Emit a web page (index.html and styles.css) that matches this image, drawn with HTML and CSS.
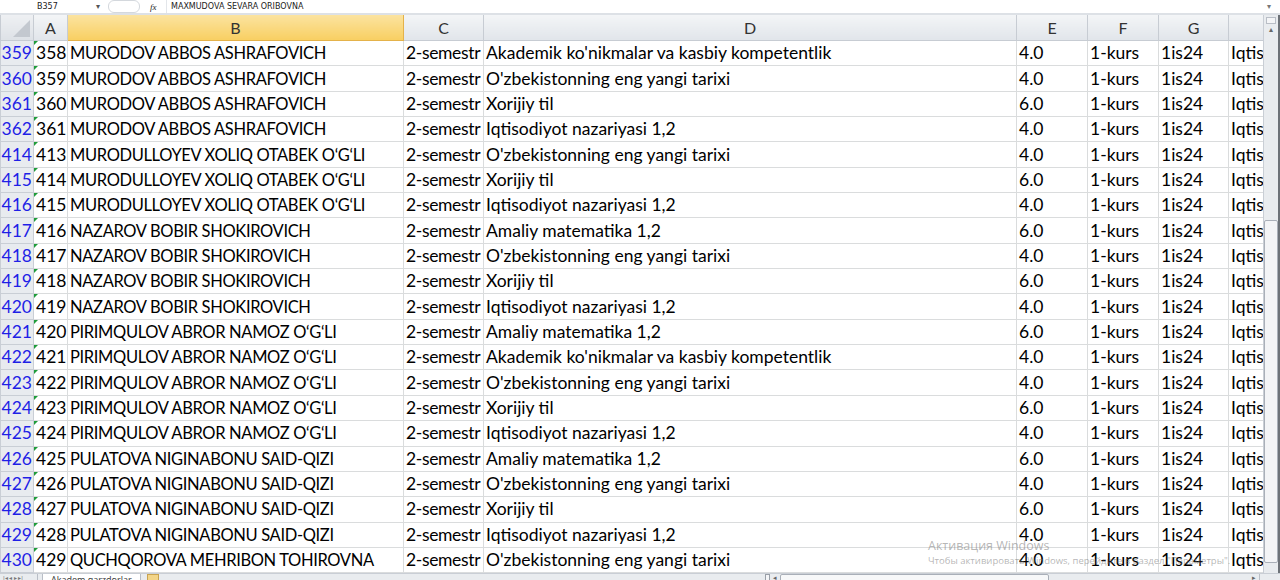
FILE: index.html
```html
<!DOCTYPE html>
<html lang="uz">
<head>
  <meta charset="UTF-8" />
  <title>Akadem qarzdorlar</title>
  <link rel="stylesheet" href="styles.css">
</head>
<body>

  <!-- formula bar -->
  <div class="formula-bar">
    <div class="name-box">B357</div>
    <div class="name-arrow">▾</div>
    <div class="fx-btn"></div>
    <div class="fx">fx</div>
    <div class="formula-text">MAXMUDOVA SEVARA ORIBOVNA</div>
    <div class="formula-expand">▾</div>
  </div>

  <div class="sheet">
    <div class="grid-wrap">
      <table class="grid">
        <colgroup>
          <col class="c-num"><col class="c-a"><col class="c-b"><col class="c-c"><col class="c-d"><col class="c-e"><col class="c-f"><col class="c-g"><col class="c-h">
        </colgroup>
        <thead>
          <tr>
            <th class="corner"><span class="corner-tri"></span></th>
            <th>A</th><th class="active">B</th><th>C</th><th>D</th><th>E</th><th>F</th><th>G</th><th></th>
          </tr>
        </thead>
        <tbody>
          <tr><td class="rn">359</td><td class="txt">358</td><td class="nm">MURODOV ABBOS ASHRAFOVICH</td><td class="sem">2-semestr</td><td>Akademik ko'nikmalar va kasbiy kompetentlik</td><td>4.0</td><td>1-kurs</td><td>1is24</td><td>Iqtisodiyot</td></tr>
          <tr><td class="rn">360</td><td class="txt">359</td><td class="nm">MURODOV ABBOS ASHRAFOVICH</td><td class="sem">2-semestr</td><td>O'zbekistonning eng yangi tarixi</td><td>4.0</td><td>1-kurs</td><td>1is24</td><td>Iqtisodiyot</td></tr>
          <tr><td class="rn">361</td><td class="txt">360</td><td class="nm">MURODOV ABBOS ASHRAFOVICH</td><td class="sem">2-semestr</td><td>Xorijiy til</td><td>6.0</td><td>1-kurs</td><td>1is24</td><td>Iqtisodiyot</td></tr>
          <tr><td class="rn">362</td><td class="txt">361</td><td class="nm">MURODOV ABBOS ASHRAFOVICH</td><td class="sem">2-semestr</td><td>Iqtisodiyot nazariyasi 1,2</td><td>4.0</td><td>1-kurs</td><td>1is24</td><td>Iqtisodiyot</td></tr>
          <tr><td class="rn">414</td><td class="txt">413</td><td class="nm">MURODULLOYEV XOLIQ OTABEK O‘G‘LI</td><td class="sem">2-semestr</td><td>O'zbekistonning eng yangi tarixi</td><td>4.0</td><td>1-kurs</td><td>1is24</td><td>Iqtisodiyot</td></tr>
          <tr><td class="rn">415</td><td class="txt">414</td><td class="nm">MURODULLOYEV XOLIQ OTABEK O‘G‘LI</td><td class="sem">2-semestr</td><td>Xorijiy til</td><td>6.0</td><td>1-kurs</td><td>1is24</td><td>Iqtisodiyot</td></tr>
          <tr><td class="rn">416</td><td class="txt">415</td><td class="nm">MURODULLOYEV XOLIQ OTABEK O‘G‘LI</td><td class="sem">2-semestr</td><td>Iqtisodiyot nazariyasi 1,2</td><td>4.0</td><td>1-kurs</td><td>1is24</td><td>Iqtisodiyot</td></tr>
          <tr><td class="rn">417</td><td class="txt">416</td><td class="nm">NAZAROV BOBIR SHOKIROVICH</td><td class="sem">2-semestr</td><td>Amaliy matematika 1,2</td><td>6.0</td><td>1-kurs</td><td>1is24</td><td>Iqtisodiyot</td></tr>
          <tr><td class="rn">418</td><td class="txt">417</td><td class="nm">NAZAROV BOBIR SHOKIROVICH</td><td class="sem">2-semestr</td><td>O'zbekistonning eng yangi tarixi</td><td>4.0</td><td>1-kurs</td><td>1is24</td><td>Iqtisodiyot</td></tr>
          <tr><td class="rn">419</td><td class="txt">418</td><td class="nm">NAZAROV BOBIR SHOKIROVICH</td><td class="sem">2-semestr</td><td>Xorijiy til</td><td>6.0</td><td>1-kurs</td><td>1is24</td><td>Iqtisodiyot</td></tr>
          <tr><td class="rn">420</td><td class="txt">419</td><td class="nm">NAZAROV BOBIR SHOKIROVICH</td><td class="sem">2-semestr</td><td>Iqtisodiyot nazariyasi 1,2</td><td>4.0</td><td>1-kurs</td><td>1is24</td><td>Iqtisodiyot</td></tr>
          <tr><td class="rn">421</td><td class="txt">420</td><td class="nm">PIRIMQULOV ABROR NAMOZ O‘G‘LI</td><td class="sem">2-semestr</td><td>Amaliy matematika 1,2</td><td>6.0</td><td>1-kurs</td><td>1is24</td><td>Iqtisodiyot</td></tr>
          <tr><td class="rn">422</td><td class="txt">421</td><td class="nm">PIRIMQULOV ABROR NAMOZ O‘G‘LI</td><td class="sem">2-semestr</td><td>Akademik ko'nikmalar va kasbiy kompetentlik</td><td>4.0</td><td>1-kurs</td><td>1is24</td><td>Iqtisodiyot</td></tr>
          <tr><td class="rn">423</td><td class="txt">422</td><td class="nm">PIRIMQULOV ABROR NAMOZ O‘G‘LI</td><td class="sem">2-semestr</td><td>O'zbekistonning eng yangi tarixi</td><td>4.0</td><td>1-kurs</td><td>1is24</td><td>Iqtisodiyot</td></tr>
          <tr><td class="rn">424</td><td class="txt">423</td><td class="nm">PIRIMQULOV ABROR NAMOZ O‘G‘LI</td><td class="sem">2-semestr</td><td>Xorijiy til</td><td>6.0</td><td>1-kurs</td><td>1is24</td><td>Iqtisodiyot</td></tr>
          <tr><td class="rn">425</td><td class="txt">424</td><td class="nm">PIRIMQULOV ABROR NAMOZ O‘G‘LI</td><td class="sem">2-semestr</td><td>Iqtisodiyot nazariyasi 1,2</td><td>4.0</td><td>1-kurs</td><td>1is24</td><td>Iqtisodiyot</td></tr>
          <tr><td class="rn">426</td><td class="txt">425</td><td class="nm">PULATOVA NIGINABONU SAID-QIZI</td><td class="sem">2-semestr</td><td>Amaliy matematika 1,2</td><td>6.0</td><td>1-kurs</td><td>1is24</td><td>Iqtisodiyot</td></tr>
          <tr><td class="rn">427</td><td class="txt">426</td><td class="nm">PULATOVA NIGINABONU SAID-QIZI</td><td class="sem">2-semestr</td><td>O'zbekistonning eng yangi tarixi</td><td>4.0</td><td>1-kurs</td><td>1is24</td><td>Iqtisodiyot</td></tr>
          <tr><td class="rn">428</td><td class="txt">427</td><td class="nm">PULATOVA NIGINABONU SAID-QIZI</td><td class="sem">2-semestr</td><td>Xorijiy til</td><td>6.0</td><td>1-kurs</td><td>1is24</td><td>Iqtisodiyot</td></tr>
          <tr><td class="rn">429</td><td class="txt">428</td><td class="nm">PULATOVA NIGINABONU SAID-QIZI</td><td class="sem">2-semestr</td><td>Iqtisodiyot nazariyasi 1,2</td><td>4.0</td><td>1-kurs</td><td>1is24</td><td>Iqtisodiyot</td></tr>
          <tr><td class="rn">430</td><td class="txt">429</td><td class="nm">QUCHQOROVA MEHRIBON TOHIROVNA</td><td class="sem">2-semestr</td><td>O'zbekistonning eng yangi tarixi</td><td>4.0</td><td>1-kurs</td><td>1is24</td><td>Iqtisodiyot</td></tr>
        </tbody>
      </table>
    </div>

    <!-- vertical scrollbar -->
    <div class="vscroll">
      <div class="split-box"></div>
      <div class="arrow-up">▴</div>
      <div class="thumb"></div>
    </div>
  </div>

  <!-- sheet tabs -->
  <div class="tab-bar">
    <div class="tab-nav">I◂ ◂ ▸ ▸I</div>
    <div class="tab">Akadem qarzdorlar</div>
    <div class="tab-new"></div>
    <div class="tab-space"></div>
    <div class="hsplit"></div>
    <div class="harrow">◂</div>
    <div class="hthumb"></div>
    <div class="htrack"></div>
    <div class="harrow">▸</div>
    <div class="hcorner"></div>
  </div>

  <!-- Windows watermark -->
  <div class="watermark">
    <div class="wm-title">Активация Windows</div>
    <div class="wm-sub">Чтобы активировать Windows, перейдите в раздел "Параметры".</div>
  </div>

</body>
</html>
```

FILE: styles.css
```css
body {
  margin: 0;
  width: 1280px;
  height: 580px;
  overflow: hidden;
  background: #ffffff;
  font-family: Lato, "Open Sans", sans-serif;
  color: #000;
  position: relative;
}

/* formula bar */
.formula-bar {
  height: 13px;
  display: flex;
  align-items: center;
  background: #fff;
  border-bottom: 2px solid #dde1e6;
  font-family: "DejaVu Sans", sans-serif;
  font-size: 8px;
  color: #222;
  overflow: hidden;
}

.name-box {
  padding-left: 37px;
  box-sizing: border-box;
  width: 96px;
}

.name-arrow {
  width: 12px;
  color: #555;
  font-size: 8px;
}

.fx-btn {
  width: 30px;
  height: 11px;
  border: 1px solid #d4d8dd;
  border-radius: 6px;
  margin-right: 10px;
}

.fx {
  font-family: "Liberation Serif", serif;
  font-style: italic;
  font-size: 9px;
  width: 16px;
}

.formula-text {
  flex: 1;
  padding-left: 4px;
  border-left: 1px solid #e3e6ea;
  height: 13px;
  line-height: 13px;
}

.formula-expand {
  width: 22px;
  color: #777;
  text-align: center;
}

/* sheet */
.sheet {
  display: flex;
  height: 558px;
}

.grid-wrap {
  flex: 1;
  overflow: hidden;
}

.grid {
  border-collapse: collapse;
  table-layout: fixed;
  width: 1266px;
  font-size: 17.5px;
}

.c-num { width: 33px; }
.c-a { width: 34px; }
.c-b { width: 336px; }
.c-c { width: 80px; }
.c-d { width: 533px; }
.c-e { width: 71px; }
.c-f { width: 71px; }
.c-g { width: 70px; }
.c-h { width: 38px; }

.grid th {
  height: 25px;
  padding: 0;
  font-weight: normal;
  font-size: 16px;
  color: #333;
  background: linear-gradient(#f3f5f7, #e1e5ea);
  border: 1px solid #c7ccd3;
  border-top: none;
  text-align: center;
}

.grid th.active {
  background: linear-gradient(#fbe3a0, #f8cf62);
  border-color: #e4b24a;
}

.grid th.corner {
  position: relative;
  background: linear-gradient(#eef0f3, #dde1e6);
}

.corner-tri {
  position: absolute;
  right: 3px;
  bottom: 3px;
  width: 0;
  height: 0;
  border-left: 17px solid transparent;
  border-bottom: 17px solid #c3c8cf;
}

.grid td {
  height: 24.35px;
  padding: 0 0 0 2px;
  border: 1px solid #dadcdd;
  white-space: nowrap;
  overflow: hidden;
  line-height: 24px;
}

.grid td.nm {
  font-size: 16.5px;
  letter-spacing: -0.35px;
}

.grid td.sem {
  letter-spacing: -0.35px;
}

.grid td.rn {
  color: #1f1fe6;
  background: #e8ebef;
  border-color: #c9ced5;
  text-align: right;
  padding: 0 1px 0 0;
}

/* number stored as text marker */
.grid td.txt {
  position: relative;
}

.grid td.txt::before {
  content: '';
  position: absolute;
  top: 0;
  left: 0;
  border-top: 4px solid #1f9c3a;
  border-right: 4px solid transparent;
}

/* vertical scrollbar */
.vscroll {
  width: 14px;
  border-left: 1px solid #c9ced5;
  border-right: 2px solid #6d7278;
  background: #e9ecef;
  position: relative;
}

.split-box {
  height: 5px;
  margin: 2px 2px 0;
  border: 1px solid #b9bec6;
  background: #f4f5f7;
}

.arrow-up {
  font-size: 8px;
  text-align: center;
  color: #666;
  line-height: 10px;
}

.thumb {
  position: absolute;
  top: 205px;
  left: 0;
  right: 0;
  bottom: 10px;
  border: 1px solid #a9afb8;
  border-radius: 2px;
  background: #f3f4f6;
}

/* tabs */
.tab-bar {
  height: 9px;
  display: flex;
  align-items: flex-start;
  background: #e9ecef;
  border-top: 1px solid #c9ced5;
  font-family: "Open Sans", sans-serif;
  font-size: 9px;
  color: #333;
  overflow: hidden;
}

.tab-nav {
  width: 38px;
  padding-left: 3px;
  box-sizing: border-box;
  font-size: 6px;
  line-height: 9px;
  color: #777;
  white-space: nowrap;
  border-right: 1px solid #b9bec6;
}

.tab {
  margin-left: 4px;
  padding: 0 8px;
  background: #fff;
  line-height: 12px;
  border-left: 1px solid #b9bec6;
  border-right: 1px solid #b9bec6;
}

.tab-new {
  width: 12px;
  height: 9px;
  margin-left: 6px;
  background: #f3d588;
  border: 1px solid #c9a451;
  box-sizing: border-box;
}

.tab-space {
  flex: 1;
}

.hsplit {
  width: 3px;
  height: 8px;
  border: 1px solid #9aa0a8;
  background: #f4f5f7;
}

.harrow {
  width: 10px;
  font-size: 7px;
  line-height: 8px;
  text-align: center;
  color: #666;
}

.hthumb {
  width: 267px;
  height: 8px;
  border: 1px solid #a9afb8;
  border-radius: 2px;
  background: #f7f8f9;
}

.htrack {
  width: 200px;
}

.hcorner {
  width: 20px;
  height: 9px;
  border-left: 1px solid #b9bec6;
}

/* Windows watermark */
.watermark {
  position: absolute;
  left: 928px;
  top: 538px;
  color: rgba(120, 120, 120, 0.55);
  font-family: "Open Sans", sans-serif;
  pointer-events: none;
}

.wm-title {
  font-size: 12.5px;
  line-height: 16px;
}

.wm-sub {
  font-size: 9.5px;
  line-height: 14px;
}
```
